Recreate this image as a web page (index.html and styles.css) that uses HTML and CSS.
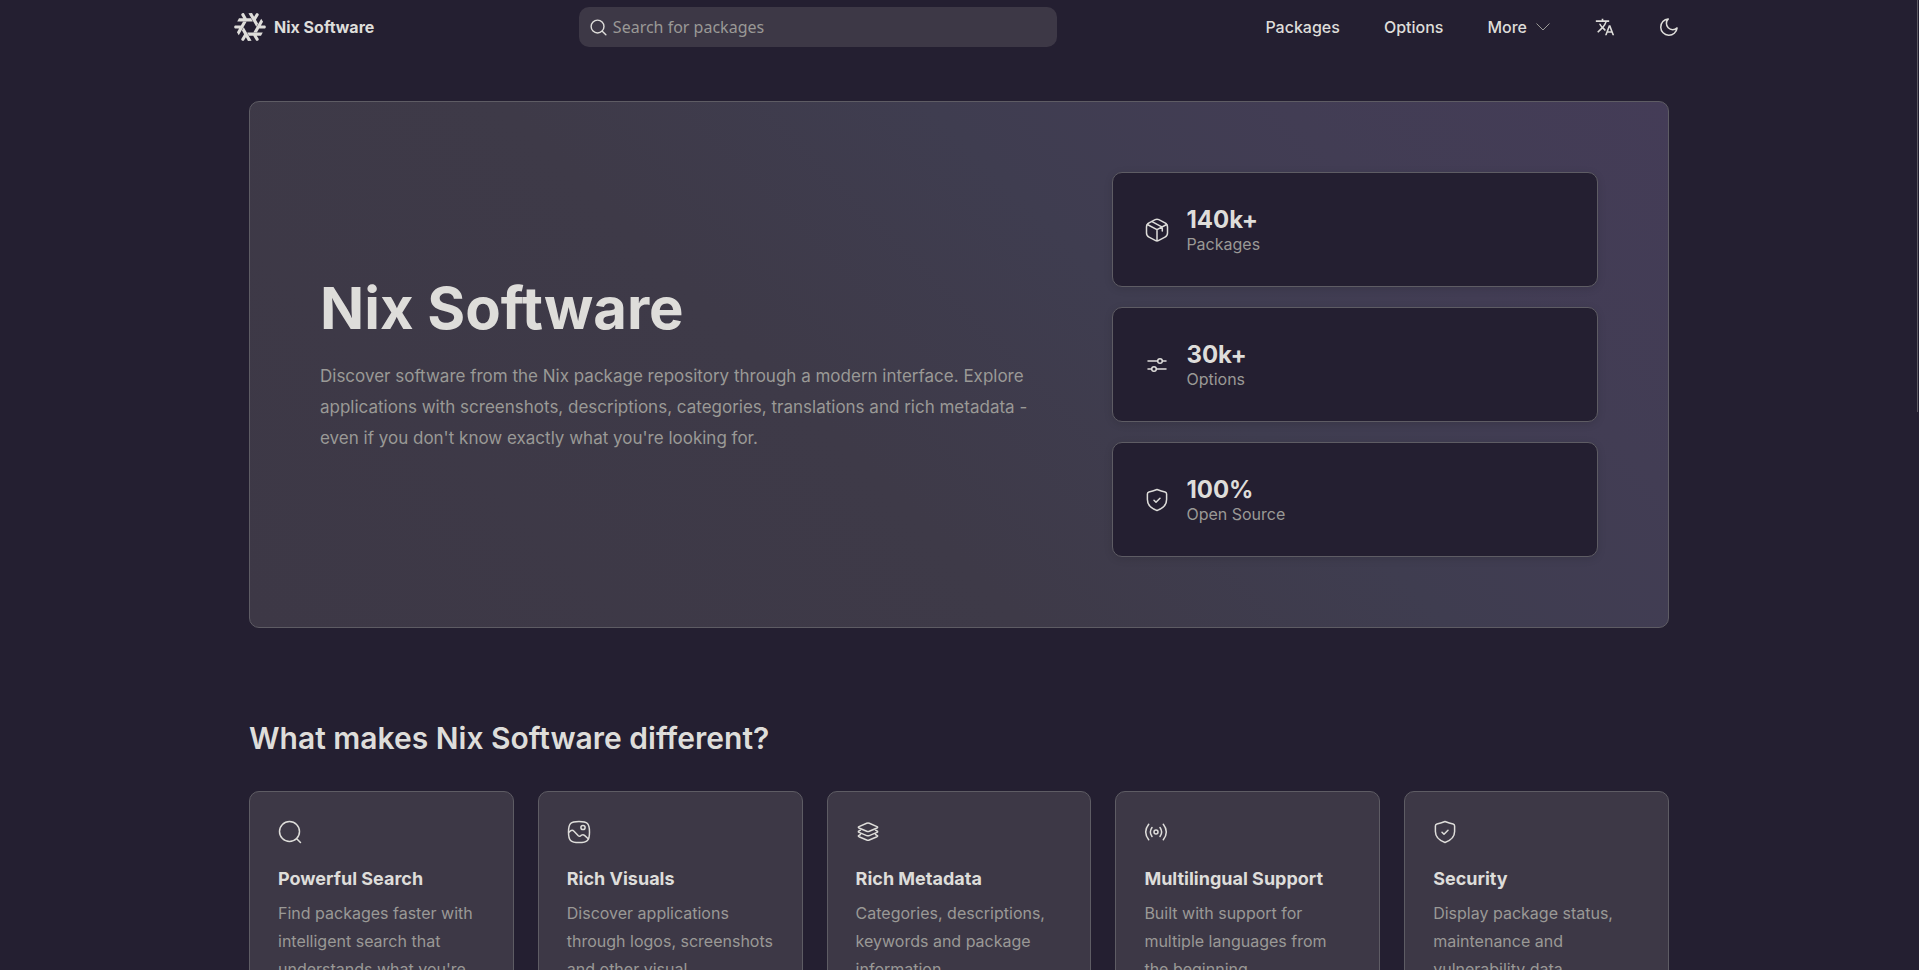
FILE: index.html
```html
<!DOCTYPE html>
<html lang="en">
<head>
<meta charset="utf-8">
<title>Nix Software</title>
<link rel="stylesheet" href="styles.css">
</head>
<body>
<header class="topbar">
  <a class="brand" href="#">
    <svg class="brand-logo" viewBox="0 0 24 24" aria-hidden="true"><path d="M7.352 1.592l-1.364.002L5.32 2.75l1.557 2.713-3.137-.008-1.32 2.34H14.11l-1.353-2.332-3.192-.006-2.214-3.865zm6.175 0l-2.687.025 5.846 10.127 1.341-2.34-1.59-2.765 2.24-3.85-.683-1.182h-1.36l-1.56 2.705-1.546-2.72zm6.887 4.195l-5.846 10.125 2.696-.008 1.601-2.76 4.453.016.682-1.183-.666-1.157-3.13-.008L21.778 8.1l-1.365-2.313zM9.432 8.086l-2.696.008-1.601 2.76-4.453-.016L0 12.02l.666 1.157 3.13.008-1.575 2.71 1.365 2.315L9.432 8.086zM7.33 12.25l-.006.01-.002-.004-1.342 2.34 1.59 2.765-2.24 3.85.684 1.182H7.35l.004-.006h.001l1.567-2.698 1.558 2.72 2.688-.026-.004-.006h.01L7.33 12.25zm2.55 3.93l1.354 2.332 3.192.006 2.215 3.865 1.363-.002.668-1.156-1.557-2.713 3.137.008 1.32-2.34H9.881z"/></svg>
    <span>Nix Software</span>
  </a>
  <form class="search" role="search">
    <label for="q" aria-label="Search"><svg class="search-icon" viewBox="0 0 18 18" aria-hidden="true"><circle cx="8" cy="8" r="6.8"/><path d="M13 13l3.800 3.800"/></svg></label>
    <input id="q" type="search" placeholder="Search for packages">
  </form>
  <nav class="nav">
    <a href="#">Packages</a>
    <a href="#">Options</a>
    <button class="more" type="button">More
      <svg class="chevron" viewBox="0 0 16 16" aria-hidden="true"><path d="M1.500 4.500L8 11l6.500-6.500"/></svg>
    </button>
    <button type="button" aria-label="Language">
      <svg class="solid" viewBox="0 0 24 24" aria-hidden="true"><path d="M12.870 15.070l-2.540-2.510.030-.030A17.520 17.520 0 0 0 14.070 6H17V4h-7V2H8v2H1v2h11.170C11.500 7.920 10.440 9.750 9 11.350 8.070 10.320 7.300 9.190 6.690 8h-2c.730 1.630 1.730 3.170 2.980 4.560l-5.090 5.020L4 19l5-5 3.110 3.110.760-2.040zM18.500 10h-2L12 22h2l1.120-3h4.750L21 22h2l-4.500-12zm-2.620 7l1.620-4.330L19.120 17h-3.240z"/></svg>
    </button>
    <button type="button" aria-label="Dark theme">
      <svg class="line" viewBox="0 0 20 20" aria-hidden="true"><path d="M9.300 1.900A8.200 8.200 0 1 0 18.100 10.900 5.600 5.600 0 0 1 9.300 1.900z"/></svg>
    </button>
  </nav>
</header>

<main class="page">
  <section class="hero">
    <div class="intro">
      <h1>Nix Software</h1>
      <p>Discover software from the Nix package repository through a modern interface. Explore applications with screenshots, descriptions, categories, translations and rich metadata - even if you don't know exactly what you're looking for.</p>
    </div>
    <div class="stats">
      <article class="stat">
        <svg class="icon" viewBox="0 0 24 24" aria-hidden="true"><path d="M10.200 1.700L4 4.900Q1.500 6.200 1.500 9v6q0 2.800 2.500 4.100l6.200 3.200q1.800.900 3.600 0l6.200-3.200q2.500-1.300 2.500-4.100V9q0-2.800-2.500-4.100l-6.200-3.200q-1.800-.900-3.600 0z"/><path d="M2.300 6.500L12 11.700l9.700-5.200M12 11.700v11M7 3.600l10.300 5.500v4"/></svg>
        <div><strong>140k+</strong><span>Packages</span></div>
      </article>
      <article class="stat">
        <svg class="icon" viewBox="0 0 24 24" aria-hidden="true"><path d="M3 8h9.500M17.500 8H21M3 16h3.500M11.500 16H21"/><circle cx="15" cy="8" r="2.300"/><circle cx="9" cy="16" r="2.300"/></svg>
        <div><strong>30k+</strong><span>Options</span></div>
      </article>
      <article class="stat">
        <svg class="icon" viewBox="0 0 24 24" aria-hidden="true"><path d="M12 1.500C9.500 2.500 6.500 3.500 3.900 4Q2.400 4.400 2.400 6v5.500c0 5.800 4.600 9.200 9.600 11 5-1.800 9.600-5.200 9.600-11V6q0-1.600-1.500-2C17.500 3.500 14.500 2.500 12 1.500z"/><path d="M9 12.300l2 2 4-4"/></svg>
        <div><strong>100%</strong><span>Open Source</span></div>
      </article>
    </div>
  </section>

  <section class="features">
    <h2>What makes Nix Software different?</h2>
    <div class="feature-grid">
      <article class="feature">
        <svg class="icon" viewBox="0 0 24 24" aria-hidden="true"><circle cx="11.500" cy="11.500" r="10"/><path d="M18.700 18.700l3.800 3.800"/></svg>
        <h3>Powerful Search</h3>
        <p>Find packages faster with intelligent search that understands what you're looking for.</p>
      </article>
      <article class="feature">
        <svg class="icon" viewBox="0 0 24 24" aria-hidden="true"><path d="M12 1.500c8.500 0 10.500 2 10.500 10.500S20.500 22.500 12 22.500 1.500 20.500 1.500 12 3.500 1.500 12 1.500z"/><circle cx="16" cy="7.500" r="2.100"/><path d="M1.700 12.500l1.800-1.600q1.800-1.400 3.500.300l4.300 4.500q1 1 2.200.200l1-.700q1.600-1 3 .200l4 3.600"/></svg>
        <h3>Rich Visuals</h3>
        <p>Discover applications through logos, screenshots and other visual information.</p>
      </article>
      <article class="feature">
        <svg class="icon" viewBox="0 0 24 24" aria-hidden="true"><path d="M10.700 3.300L3 6.600q-1.300.700 0 1.400l7.700 3.300q1.300.500 2.600 0L21 8q1.300-.700 0-1.400l-7.700-3.300q-1.300-.500-2.600 0z"/><path d="M4.500 10.200L3 11q-1.300.700 0 1.400l7.700 3.200q1.300.500 2.600 0l7.700-3.200q1.300-.700 0-1.400l-1.500-.800M4.500 14.500L3 15.300q-1.300.700 0 1.400l7.700 3.300q1.300.500 2.600 0l7.700-3.300q1.300-.700 0-1.400l-1.500-.800"/></svg>
        <h3>Rich Metadata</h3>
        <p>Categories, descriptions, keywords and package information.</p>
      </article>
      <article class="feature">
        <svg class="icon" viewBox="0 0 24 24" aria-hidden="true"><circle cx="12" cy="12" r="2"/><path d="M8 7.500q-3.300 4.500 0 9M16 7.500q3.300 4.500 0 9M4.700 4.300q-6 7.700 0 15.400M19.300 4.300q6 7.700 0 15.400"/></svg>
        <h3>Multilingual Support</h3>
        <p>Built with support for multiple languages from the beginning.</p>
      </article>
      <article class="feature">
        <svg class="icon" viewBox="0 0 24 24" aria-hidden="true"><path d="M12 1.500C9.500 2.500 6.500 3.500 3.900 4Q2.400 4.400 2.400 6v5.500c0 5.800 4.600 9.200 9.600 11 5-1.800 9.600-5.200 9.600-11V6q0-1.600-1.500-2C17.500 3.500 14.500 2.500 12 1.500z"/><path d="M9 12.300l2 2 4-4"/></svg>
        <h3>Security</h3>
        <p>Display package status, maintenance and vulnerability data.</p>
      </article>
    </div>
  </section>
</main>
<div class="scroll-thumb"></div>
</body>
</html>
```

FILE: styles.css
```css
:root {
  --bg: #241f31;
  --surface: #3d3846;
  --line: #5e5c64;
  --text: #deddda;
  --muted: #9a9996;
}

* { box-sizing: border-box; }

html { scrollbar-width: none; }

body {
  margin: 0;
  padding-right: 1px;
  background: var(--bg);
  color: var(--text);
  font: 16px/24px Inter, "Noto Sans", sans-serif;
}

h1, h2, h3, p { margin: 0; }

a { color: inherit; text-decoration: none; }

button {
  display: flex;
  align-items: center;
  padding: 0;
  border: 0;
  background: none;
  color: inherit;
  font: inherit;
}

svg { display: block; flex: none; }

.topbar {
  display: flex;
  align-items: center;
  justify-content: space-between;
  max-width: 1480px;
  height: 54px;
  margin: 0 auto;
  padding: 0 20px 0 15px;
}

.brand {
  display: flex;
  align-items: center;
  gap: 8px;
  font-weight: 700;
}

.brand-logo {
  width: 32px;
  height: 32px;
  fill: currentColor;
}

.search {
  display: flex;
  align-items: center;
  gap: 6px;
  width: 478px;
  height: 40px;
  padding: 0 11px;
  border-radius: 10px;
  background: var(--surface);
}

.search-icon {
  width: 17px;
  height: 17px;
  fill: none;
  stroke: currentColor;
  stroke-width: 1.5;
  stroke-linecap: round;
}

.search input {
  flex: 1;
  min-width: 0;
  padding: 0;
  border: 0;
  outline: 0;
  background: none;
  color: inherit;
  font: 16px/24px "Noto Sans", sans-serif;
}

.search input::placeholder { color: var(--muted); opacity: 1; }

.nav {
  display: flex;
  align-items: center;
  gap: 44px;
  padding-left: 4px;
  font-weight: 500;
}

.more { gap: 8px; }

.chevron {
  width: 16px;
  height: 16px;
  fill: none;
  stroke: var(--muted);
}

.solid {
  width: 20px;
  height: 20px;
  fill: currentColor;
}

.line {
  width: 20px;
  height: 20px;
  fill: none;
  stroke: currentColor;
  stroke-width: 1.5;
  stroke-linejoin: round;
}

.page {
  max-width: 1420px;
  margin: 0 auto;
  padding-top: 47px;
}

.hero {
  display: grid;
  grid-template-columns: 3fr 2fr;
  align-items: center;
  gap: 64px;
  padding: 70px;
  border: 1px solid var(--line);
  border-radius: 10px;
  background: linear-gradient(45deg, #3d3846 0%, #3e3a48 40%, #3f3d50 62%, #423d54 80%, #443c57 100%);
}

.intro {
  display: grid;
  gap: 20px;
}

.intro h1 {
  font-size: 58px;
  line-height: 66px;
  font-weight: 700;
}

.intro p {
  color: var(--muted);
  font-size: 17px;
  line-height: 31px;
}

.stats {
  display: grid;
  gap: 20px;
}

.stat {
  display: flex;
  align-items: center;
  gap: 17px;
  padding: 32px;
  border: 1px solid var(--line);
  border-radius: 10px;
  background: var(--bg);
  box-shadow: 0 2px 8px rgba(0, 0, 0, 0.12);
}

.stat strong, .stat span { display: block; }

.stat strong {
  font-size: 24px;
  line-height: 30px;
  font-weight: 700;
}

.stat span { color: var(--muted); line-height: 19px; }

.icon {
  width: 24px;
  height: 24px;
  fill: none;
  stroke: currentColor;
  stroke-width: 1.5;
  stroke-linecap: round;
  stroke-linejoin: round;
}

.features { padding: 90px 0 96px; }

.features h2 {
  font-size: 30px;
  line-height: 40px;
  font-weight: 600;
}

.feature-grid {
  display: grid;
  grid-template-columns: repeat(5, 1fr);
  gap: 24px;
  margin-top: 33px;
}

.feature {
  padding: 28px;
  border: 1px solid var(--line);
  border-radius: 10px;
  background: var(--surface);
}

.feature h3 {
  margin-top: 22px;
  font-size: 18px;
  line-height: 26px;
  font-weight: 700;
}

.feature p {
  margin-top: 7px;
  color: var(--muted);
  line-height: 28px;
}

.scroll-thumb {
  position: fixed;
  top: 0;
  right: 1px;
  width: 1px;
  height: 412px;
  background: var(--line);
}
```
